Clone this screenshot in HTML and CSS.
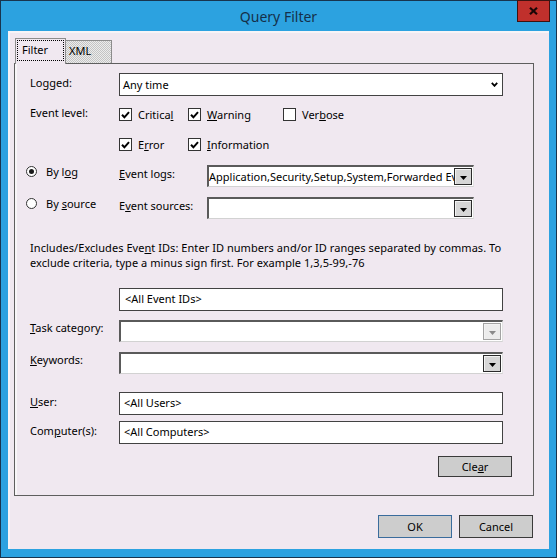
FILE: index.html
```html
<!DOCTYPE html>
<html>
<head>
<meta charset="utf-8">
<title>Query Filter</title>
<link rel="stylesheet" href="styles.css">
</head>
<body>
<div class="window">
  <div class="titlebar">
    <span class="title">Query Filter</span>
    <div class="close"><svg width="9" height="8" viewBox="0 0 9 8"><path d="M1 0.8 L8 7.2 M8 0.8 L1 7.2" stroke="#1a0606" stroke-width="2.2"/></svg></div>
  </div>
  <div class="client">
    <div class="tabs">
      <div class="tab tab-active"><span class="focus">Filter</span></div>
      <div class="tab tab-xml">XML</div>
    </div>
    <div class="panel">
      <div class="row">
        <span class="lbl lbl-pad">Lo<u>g</u>ged:</span>
        <div class="field select"><span>Any time</span><svg width="7" height="5" viewBox="0 0 7 5"><path d="M0.8 0.8 L3.5 3.8 L6.2 0.8" fill="none" stroke="#000" stroke-width="1.8"/></svg></div>
      </div>
      <div class="row level">
        <span class="lbl">Event level:</span>
        <div class="checks">
          <label class="chk"><span class="box"><svg width="9" height="8" viewBox="0 0 9 8"><path d="M1 3.8 L3.4 6.3 L8 1.2" fill="none" stroke="#000" stroke-width="2"/></svg></span><span>Critica<u>l</u></span></label>
          <label class="chk"><span class="box"><svg width="9" height="8" viewBox="0 0 9 8"><path d="M1 3.8 L3.4 6.3 L8 1.2" fill="none" stroke="#000" stroke-width="2"/></svg></span><span><u>W</u>arning</span></label>
          <label class="chk"><span class="box"></span><span>Ver<u>b</u>ose</span></label>
          <label class="chk"><span class="box"><svg width="9" height="8" viewBox="0 0 9 8"><path d="M1 3.8 L3.4 6.3 L8 1.2" fill="none" stroke="#000" stroke-width="2"/></svg></span><span>E<u>r</u>ror</span></label>
          <label class="chk"><span class="box"><svg width="9" height="8" viewBox="0 0 9 8"><path d="M1 3.8 L3.4 6.3 L8 1.2" fill="none" stroke="#000" stroke-width="2"/></svg></span><span><u>I</u>nformation</span></label>
        </div>
      </div>
      <div class="row srcrow first">
        <label class="radio-opt"><span class="radio on"></span><span>By l<u>o</u>g</span></label>
        <span class="sublbl"><u>E</u>vent logs:</span>
        <div class="combo wide"><span class="combo-text">Application,Security,Setup,System,Forwarded Events</span><span class="ddbtn"><svg width="7" height="4" viewBox="0 0 7 4"><path d="M0 0 H7 L3.5 4 Z" fill="#000"/></svg></span></div>
      </div>
      <div class="row srcrow second">
        <label class="radio-opt"><span class="radio"></span><span>By <u>s</u>ource</span></label>
        <span class="sublbl">E<u>v</u>ent sources:</span>
        <div class="combo wide"><span class="combo-text"></span><span class="ddbtn"><svg width="7" height="4" viewBox="0 0 7 4"><path d="M0 0 H7 L3.5 4 Z" fill="#000"/></svg></span></div>
      </div>
      <p class="desc">Includes/Excludes Eve<u>n</u>t IDs: Enter ID numbers and/or ID ranges separated by commas. To<br>exclude criteria, type a minus sign first. For example 1,3,5-99,-76</p>
      <div class="row ids">
        <div class="field indent">&lt;All Event IDs&gt;</div>
      </div>
      <div class="row task">
        <span class="lbl"><u>T</u>ask category:</span>
        <div class="combo full"><span class="combo-text"></span><span class="ddbtn disabled"><svg width="7" height="4" viewBox="0 0 7 4"><path d="M0 0 H7 L3.5 4 Z" fill="#8a8a8a"/></svg></span></div>
      </div>
      <div class="row keywords">
        <span class="lbl"><u>K</u>eywords:</span>
        <div class="combo full"><span class="combo-text"></span><span class="ddbtn"><svg width="7" height="4" viewBox="0 0 7 4"><path d="M0 0 H7 L3.5 4 Z" fill="#000"/></svg></span></div>
      </div>
      <div class="row user">
        <span class="lbl lbl-pad"><u>U</u>ser:</span>
        <div class="field">&lt;All Users&gt;</div>
      </div>
      <div class="row computer">
        <span class="lbl lbl-pad">Com<u>p</u>uter(s):</span>
        <div class="field">&lt;All Computers&gt;</div>
      </div>
      <div class="clearrow">
        <button class="btn small">Cle<u>a</u>r</button>
      </div>
    </div>
    <div class="footer">
      <button class="btn default">OK</button>
      <button class="btn">Cancel</button>
    </div>
  </div>
</div>
</body>
</html>
```

FILE: styles.css
```css
html, body {
  margin: 0;
  padding: 0;
  background: #2ca2e0;
}
body {
  font-family: "Noto Sans", "Open Sans", sans-serif;
  font-size: 11px;
  color: #000;
}
u {
  text-underline-offset: 1px;
  text-decoration-thickness: 1px;
}
.window {
  width: 557px;
  height: 558px;
  box-sizing: border-box;
  border: 1px solid #18354f;
  background: #2ca2e0;
  padding: 0 7px 8px 7px;
  position: relative;
  display: flex;
  flex-direction: column;
}
.titlebar {
  height: 30px;
  flex: none;
  display: flex;
  align-items: center;
  justify-content: center;
}
.title {
  font-size: 14px;
  color: #15304a;
  line-height: 18px;
  margin-top: 1px;
}
.close {
  position: absolute;
  left: 516px;
  top: -1px;
  width: 33px;
  height: 22px;
  box-sizing: border-box;
  background: #c0302c;
  border: 1px solid #3e1210;
  display: flex;
  align-items: center;
  justify-content: center;
}
.client {
  flex: 1;
  background: #f0e8f0;
  padding: 7px 16px 0 6px;
  display: flex;
  flex-direction: column;
  box-shadow: inset 2px 2px 0 #f7f4f7;
}
.tabs {
  display: flex;
  align-items: flex-end;
  height: 26px;
  margin: 0 0 -1px 1px;
  position: relative;
  z-index: 1;
  flex: none;
}
.tab {
  box-sizing: border-box;
  border: 1px solid #8c8c8c;
  border-bottom: none;
  line-height: 19px;
}
.tab-active {
  width: 51px;
  height: 26px;
  background: #f0e8f0;
  padding: 1px 1px 0 1px;
}
.focus {
  display: block;
  height: 21px;
  box-sizing: border-box;
  border: 1px dotted #000;
  padding-left: 4px;
  line-height: 18px;
}
.tab-xml {
  width: 46px;
  height: 23px;
  margin-bottom: 1px;
  border-left: none;
  padding-left: 3px;
  line-height: 20px;
  background: repeating-conic-gradient(#c4c4c4 0 25%, #ececec 0 50%) 0 0 / 2px 2px;
}
.panel {
  width: 520px;
  height: 433px;
  flex: none;
  box-sizing: border-box;
  border: 1px solid #5e5e5e;
  padding: 9px 21px 0 15px;
  display: flex;
  flex-direction: column;
  box-shadow: inset 2px 0 0 #f8f6f8;
}
.row {
  display: flex;
  align-items: flex-start;
}
.lbl {
  width: 89px;
  flex: none;
  line-height: 15px;
}
.lbl-pad {
  padding-top: 2px;
}
.field {
  width: 384px;
  height: 23px;
  box-sizing: border-box;
  border: 1px solid #424242;
  background: #fff;
  padding-left: 4px;
  line-height: 20px;
  white-space: nowrap;
}
.select {
  display: flex;
  align-items: center;
  justify-content: space-between;
  padding: 0 4px 0 3px;
}
.level {
  margin-top: 9px;
}
.checks {
  display: grid;
  grid-template-columns: 69px 95px auto;
  row-gap: 15px;
  margin-top: 2px;
}
.chk {
  display: flex;
  align-items: center;
  gap: 6px;
  line-height: 15px;
  white-space: nowrap;
}
.box {
  width: 13px;
  height: 13px;
  flex: none;
  box-sizing: border-box;
  border: 1px solid #333;
  background: #fff;
  display: flex;
  align-items: center;
  justify-content: center;
}
.srcrow.first {
  margin-top: 13px;
}
.srcrow.second {
  margin-top: 10px;
}
.radio-opt {
  width: 93px;
  flex: none;
  margin-left: -4px;
  margin-top: -1px;
  display: flex;
  align-items: center;
  gap: 9px;
  line-height: 15px;
  white-space: nowrap;
}
.radio {
  width: 11px;
  height: 11px;
  flex: none;
  box-sizing: border-box;
  border: 1px solid #333;
  border-radius: 50%;
  background: #fff;
  display: flex;
  align-items: center;
  justify-content: center;
}
.radio.on::after {
  content: "";
  width: 5px;
  height: 5px;
  border-radius: 50%;
  background: #1a1a1a;
}
.sublbl {
  width: 88px;
  flex: none;
  line-height: 15px;
  padding-top: 1px;
}
.combo {
  height: 22px;
  box-sizing: border-box;
  border-style: solid;
  border-width: 2px 1px 1px 2px;
  border-color: #5a5a5a #e2e2e2 #d2d2d2 #5a5a5a;
  background: #fff;
  display: flex;
  align-items: center;
  justify-content: space-between;
}
.combo.wide {
  width: 267px;
}
.combo.full {
  width: 384px;
}
.combo-text {
  flex: 1;
  min-width: 0;
  overflow: hidden;
  white-space: nowrap;
  line-height: 18px;
}
.ddbtn {
  width: 18px;
  height: 17px;
  flex: none;
  box-sizing: border-box;
  border: 1px solid #2a2a2a;
  background: #d6d6d6;
  box-shadow: inset 1px 1px 0 #f2f2f2;
  margin-right: 1px;
  display: flex;
  align-items: center;
  justify-content: center;
  padding-top: 2px;
}
.ddbtn.disabled {
  border-color: #a3a3a3;
  background: #ececec;
}
.desc {
  margin: 21px 0 0 0;
  line-height: 15px;
  white-space: nowrap;
  letter-spacing: 0.05px;
}
.ids {
  margin-top: 18px;
}
.indent {
  margin-left: 89px;
  padding-left: 5px;
}
.task {
  margin-top: 9px;
}
.keywords {
  margin-top: 10px;
}
.user {
  margin-top: 18px;
}
.computer {
  margin-top: 6px;
}
.clearrow {
  display: flex;
  justify-content: flex-end;
  margin-top: 12px;
}
.btn {
  width: 74px;
  height: 23px;
  box-sizing: border-box;
  border: 1px solid #3a3a3a;
  background: #cdcdcd;
  font-family: inherit;
  font-size: 11px;
  color: #000;
  padding: 0;
  line-height: 18px;
}
.btn.small {
  height: 21px;
}
.btn.default {
  border-color: #3a6c9c;
}
.footer {
  display: flex;
  justify-content: flex-end;
  gap: 7px;
  margin-top: 19px;
}
```
